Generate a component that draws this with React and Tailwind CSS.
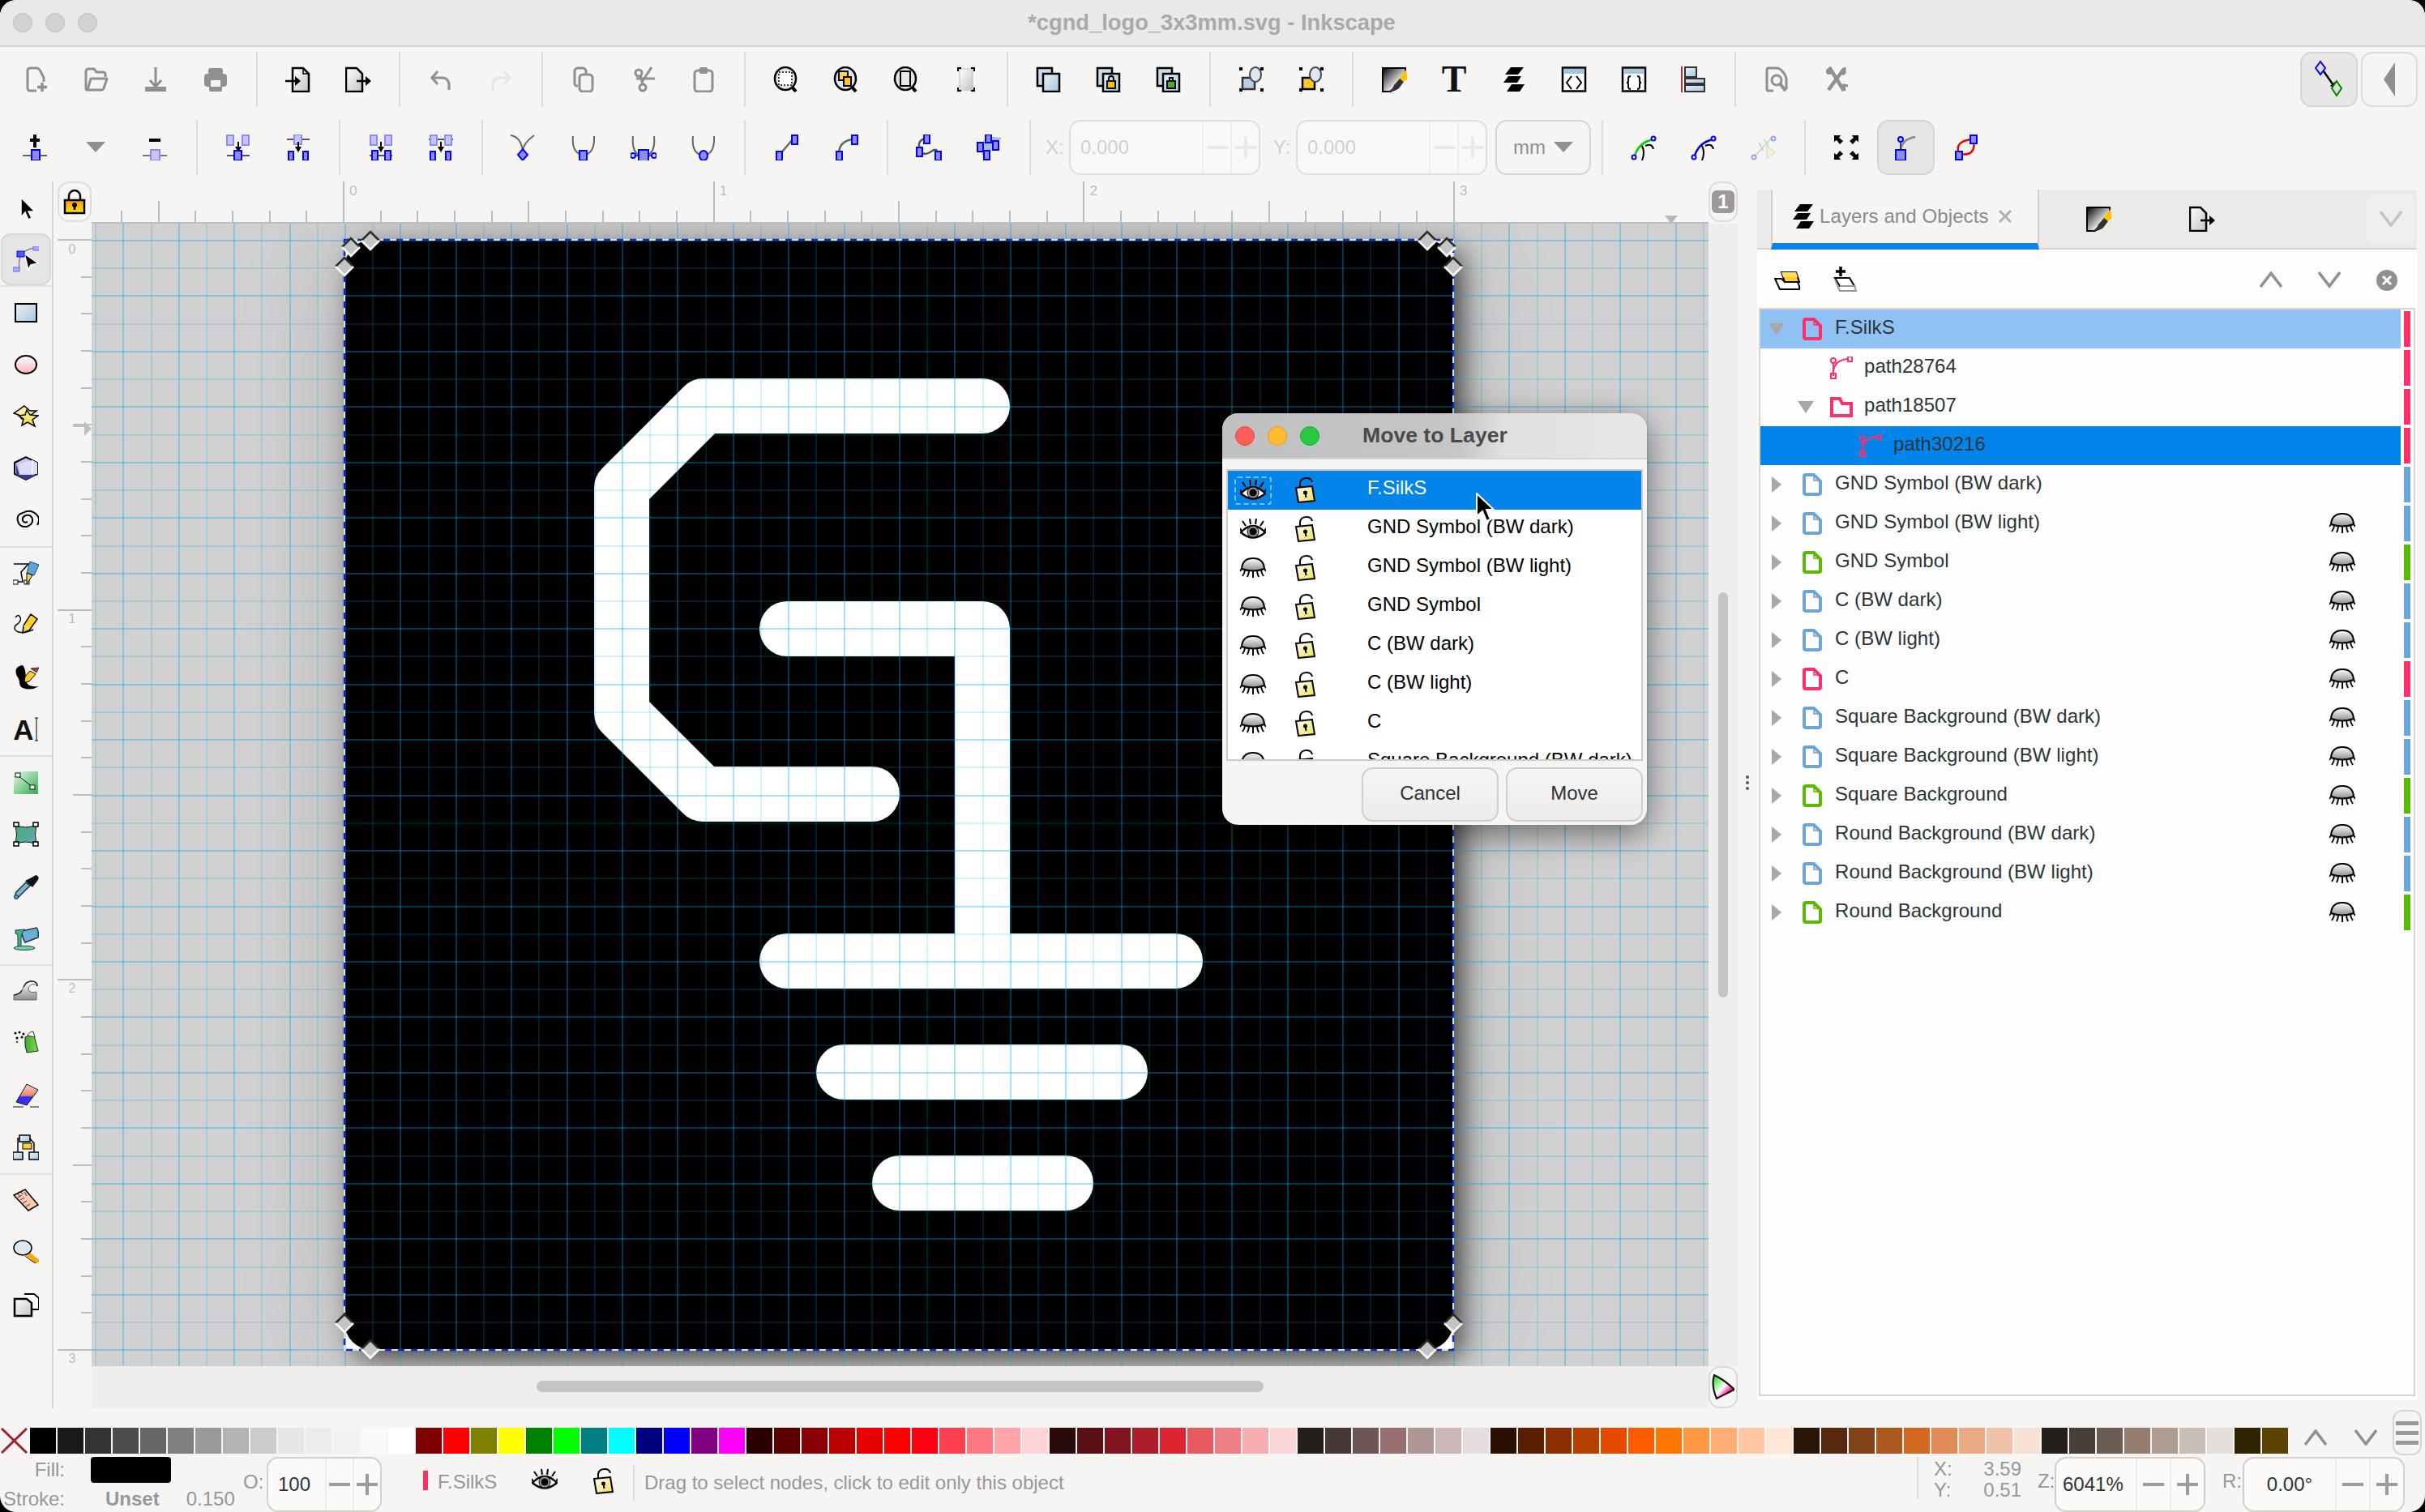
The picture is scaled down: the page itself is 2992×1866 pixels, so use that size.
import React from 'react';

const G = '#8f9091';
const Svg = ({ w = 32, h = 32, vb = '0 0 32 32', children, className }) => (
  <svg width={w} height={h} viewBox={vb} className={className} fill="none">{children}</svg>
);

const Defs = () => (
  <svg className="absolute w-0 h-0">
    <defs>
      <linearGradient id="bl" x1="0" y1="0" x2="1" y2="1"><stop offset="0" stopColor="#eaf2f8" /><stop offset="1" stopColor="#a6c6de" /></linearGradient>
      <linearGradient id="ye" x1="0" y1="0" x2="0" y2="1"><stop offset="0" stopColor="#fff6b0" /><stop offset="1" stopColor="#f5d21f" /></linearGradient>
      <linearGradient id="lk" x1="0" y1="0" x2="0" y2="1"><stop offset="0" stopColor="#ff9a00" /><stop offset="1" stopColor="#ffe800" /></linearGradient>
      <linearGradient id="lo" x1="0" y1="0" x2="1" y2="1"><stop offset="0" stopColor="#ffffff" /><stop offset="1" stopColor="#f2dc50" /></linearGradient>
      <linearGradient id="gy" x1="0" y1="0" x2="1" y2="1"><stop offset="0" stopColor="#ffffff" /><stop offset="1" stopColor="#c4c4c4" /></linearGradient>
      <linearGradient id="gv" x1="0" y1="0" x2="0" y2="1"><stop offset="0" stopColor="#ffffff" /><stop offset="1" stopColor="#8f8f8f" /></linearGradient>
      <linearGradient id="pk" x1="0" y1="0" x2="0" y2="1"><stop offset="0" stopColor="#ffffff" /><stop offset="1" stopColor="#ffb0bc" /></linearGradient>
      <linearGradient id="gn" x1="0" y1="0" x2="1" y2="1"><stop offset="0" stopColor="#e8f5ea" /><stop offset="1" stopColor="#2fae4e" /></linearGradient>
      <linearGradient id="tl" x1="0" y1="0" x2="1" y2="1"><stop offset="0" stopColor="#3fae78" /><stop offset="1" stopColor="#6aa5b5" /></linearGradient>
      <linearGradient id="fs" x1="0" y1="0" x2="1" y2="1"><stop offset="0" stopColor="#000000" /><stop offset="0.7" stopColor="#ffffff" /></linearGradient>
      <linearGradient id="er" x1="0" y1="0" x2="0" y2="1"><stop offset="0" stopColor="#ffd0c0" /><stop offset="0.55" stopColor="#f08070" /><stop offset="0.6" stopColor="#3030ff" /></linearGradient>
      <linearGradient id="sp" x1="0" y1="0" x2="1" y2="0"><stop offset="0" stopColor="#3a3" /><stop offset="1" stopColor="#8d4" /></linearGradient>
      <linearGradient id="hue" x1="0" y1="0" x2="1" y2="1"><stop offset="0" stopColor="#00e000" /><stop offset="0.5" stopColor="#ffffff" /><stop offset="0.75" stopColor="#ff0080" /><stop offset="1" stopColor="#4000ff" /></linearGradient>
    </defs>
  </svg>
);

const Nd = ({ x, y, w = 8, h = 12, pale }) => (
  <rect x={x} y={y} width={w} height={h} fill={pale ? '#c6c6ff' : '#8c8cf2'} stroke={pale ? '#8c8cf8' : '#0000ff'} strokeWidth="2" />
);
const DownArrow = () => (<><path d="M16 9v9" stroke="#000" strokeWidth="2" /><path d="M12 15h8l-4 7z" fill="#000" /></>);

/* ---------- toolbar 1 ---------- */
const iNew = <Svg><path d="M17 30H9a3 3 0 0 1-3-3V5a3 3 0 0 1 3-3h8q3 0 5 4t4 8v5" stroke={G} strokeWidth="3" /><path d="M24 20v11M18 25.500h12" stroke={G} strokeWidth="3.500" /></Svg>;
const iOpen = <Svg><path d="M6 29a2 2 0 0 1-2-2V6a3 3 0 0 1 3-3h7l3 4h8q3 0 3 3v3" stroke={G} strokeWidth="3" /><path d="M6 29l4-14h20l-4 12q-.5 2-3 2z" stroke={G} strokeWidth="3" strokeLinejoin="round" /></Svg>;
const iSave = <Svg><path d="M16 1v23M9 17l7 8 7-8" stroke={G} strokeWidth="3" /><rect x="3" y="25" width="26" height="6" fill={G} /></Svg>;
const iPrint = <Svg><rect x="7" y="2" width="18" height="8" rx="3" fill={G} /><rect x="2" y="9" width="28" height="16" rx="4" fill={G} /><rect x="8" y="20" width="16" height="11" rx="2" fill={G} /><rect x="10" y="17" width="12" height="8" fill="#f6f5f4" /></Svg>;
const DocI = ({ x = 8 }) => <path d={`M${x} 2h13l7 7v22h-20z`} fill="url(#gy)" stroke="#000" strokeWidth="2.500" />;
const iImport = <Svg><DocI x={9} /><path d="M9 2h13v7h7" stroke="#000" strokeWidth="1.500" /><path d="M-1 18h14" stroke="#000" strokeWidth="2.500" /><path d="M12 12l7 6-7 6z" fill="#000" /></Svg>;
const iExport = <Svg><DocI x={1} /><path d="M14 18h12" stroke="#000" strokeWidth="2.500" /><path d="M25 12l7 6-7 6z" fill="#000" /></Svg>;
const iUndo = <Svg><path d="M12 6L5 14l7 8M5 14h13a8 8 0 0 1 8 8v7" stroke={G} strokeWidth="3.200" /></Svg>;
const iRedo = <Svg><path d="M20 6l7 8-7 8M27 14H14a8 8 0 0 0-8 8v7" stroke="#e6e6e6" strokeWidth="3.200" /></Svg>;
const iCopy = <Svg><path d="M9 24H8a3 3 0 0 1-3-3V6a4 4 0 0 1 4-4h6a4 4 0 0 1 4 4v3" stroke={G} strokeWidth="3" /><rect x="11" y="10" width="16" height="21" rx="4" stroke={G} strokeWidth="3" /></Svg>;
const iCut = <Svg><circle cx="10" cy="8" r="4" stroke={G} strokeWidth="3" /><circle cx="15" cy="26" r="4" stroke={G} strokeWidth="3" /><path d="M12 11l3 11M26 1L14 19M7 15h23" stroke={G} strokeWidth="3" /></Svg>;
const iPaste = <Svg><rect x="5" y="5" width="22" height="26" rx="4" stroke={G} strokeWidth="3" /><rect x="11" y="1" width="10" height="8" rx="2" fill={G} /></Svg>;
const Mag = ({ children }) => (<><path d="M22 24l6 7" stroke="#000" strokeWidth="4" /><ellipse cx="15" cy="15" rx="13" ry="14" fill="#dbe8f2" stroke="#000" strokeWidth="2.500" />{children}</>);
const iZS = <Svg><Mag><rect x="7" y="7" width="16" height="16" fill="#fff" stroke="#000" strokeWidth="1.500" strokeDasharray="2 2" /></Mag></Svg>;
const iZD = <Svg><Mag><rect x="7" y="6" width="11" height="11" fill="#ffd24a" stroke="#000" strokeWidth="2" /><rect x="13" y="13" width="9" height="11" fill="#ffc020" stroke="#000" strokeWidth="2" /></Mag></Svg>;
const iZP = <Svg><Mag><rect x="9" y="6" width="12" height="18" fill="#e8e8e8" stroke="#000" strokeWidth="2" /></Mag></Svg>;
const iZC = <Svg w={24}  vb="4 0 24 32"><rect x="8" y="3" width="16" height="26" fill="url(#gy)" stroke="#bbb" /><path d="M5 1h5v2H7v3H5zM22 1h5v5h-2V3h-3zM5 26h2v3h3v2H5zM25 26h2v5h-5v-2h3z" fill="#000" /></Svg>;
const iDup = <Svg><rect x="2" y="2" width="18" height="22" fill="#c9dcec" stroke="#000" strokeWidth="2.500" /><rect x="9" y="9" width="20" height="22" fill="url(#bl)" stroke="#000" strokeWidth="2.500" /></Svg>;
const iClone = <Svg><rect x="2" y="2" width="18" height="22" fill="#c9dcec" stroke="#000" strokeWidth="2.500" /><rect x="9" y="9" width="20" height="22" fill="url(#bl)" stroke="#000" strokeWidth="2.500" /><rect x="14" y="18" width="10" height="9" fill="#ffc400" stroke="#000" strokeWidth="2" /><path d="M16 18v-3a3 3 0 0 1 6 0v3" stroke="#000" strokeWidth="2" /></Svg>;
const iUnlink = <Svg><rect x="2" y="2" width="18" height="22" fill="#c9dcec" stroke="#000" strokeWidth="2.500" /><rect x="9" y="9" width="20" height="22" fill="url(#bl)" stroke="#000" strokeWidth="2.500" /><rect x="14" y="18" width="10" height="9" fill="#4caf2a" stroke="#000" strokeWidth="2" /><path d="M17 18v-4h4v4" stroke="#000" strokeWidth="2" /></Svg>;
const Corners = () => <path d="M1 1h4v4H1zM27 27h4v4h-4zM1 27h4v4H1zM27 1h4v4h-4z" fill="#000" />;
const iSelGrp = <Svg><Corners /><rect x="5" y="14" width="15" height="14" fill="#b9d0e4" stroke="#333" strokeWidth="2.500" /><ellipse cx="21" cy="10" rx="7" ry="9" fill="#dbe8f2" stroke="#445" strokeWidth="2" /></Svg>;
const iSelGrp2 = <Svg><Corners /><rect x="5" y="14" width="15" height="14" fill="#ffc81f" stroke="#000" strokeWidth="2.500" /><ellipse cx="21" cy="10" rx="7" ry="9" fill="#dbe8f2" stroke="#445" strokeWidth="2" /></Svg>;
const iFS = <Svg><path d="M2 2h28v10L12 31H2z" fill="url(#fs)" stroke="#000" strokeWidth="2" /><path d="M31 4l2 12-8 3-4-3z" fill="#ffc400" /><path d="M23 15l5 4-6 8q-6 5-14 4 6-2 8-8z" fill="#333" /></Svg>;
const iT = <Svg w={48} h={56} vb="-8 -12 48 56"><text x="16" y="31" textAnchor="middle" fontFamily="'Liberation Serif',serif" fontWeight="bold" fontSize="46" fill="#111">T</text></Svg>;
const layersPaths = <path d="M12 1h16l-7 9H5zM9 12h16l-5 8H3zM13 22h16l-6 9H7z" fill="#000" />;
const iLayers = <Svg>{layersPaths}</Svg>;
const Win = ({ children }) => <Svg><rect x="2" y="1.500" width="28" height="29" fill="#fff" stroke="#000" strokeWidth="2.500" /><rect x="3" y="3" width="26" height="6" fill="#a6c6de" />{children}</Svg>;
const iXml = <Win><path d="M13 12l-6 8 6 8M19 12l6 8-6 8" stroke="#000" strokeWidth="2" /></Win>;
const iCss = <Win><path d="M12 12q-3 0-3 3v3q0 2-2 2 2 0 2 2v3q0 3 3 3M20 12q3 0 3 3v3q0 2 2 2-2 0-2 2v3q0 3-3 3" stroke="#000" strokeWidth="2" /></Win>;
const iAlign = <Svg><path d="M1 0v32" stroke="#c03030" strokeWidth="2" /><rect x="5" y="1" width="14" height="12" fill="url(#bl)" stroke="#333" strokeWidth="2" /><rect x="5" y="15" width="24" height="6" fill="url(#bl)" stroke="#333" strokeWidth="2" /><rect x="5" y="23" width="24" height="8" fill="url(#bl)" stroke="#333" strokeWidth="2" /></Svg>;
const iDocP = <Svg><path d="M12 30H6a2 2 0 0 1-2-2V4a2 2 0 0 1 2-2h10q4 0 8 5t4 9v12" stroke={G} strokeWidth="3" /><circle cx="16" cy="17" r="6" stroke={G} strokeWidth="3" /><path d="M20 21l7 9" stroke={G} strokeWidth="4" /></Svg>;
const iPrefs = <Svg><path d="M7 1l18 29M25 3L6 29" stroke={G} strokeWidth="4.500" /><circle cx="7" cy="6" r="4" fill={G} /><path d="M26 1v7l-3 2M26 30l-1-7 5 1" stroke={G} strokeWidth="3" /></Svg>;
const iSnap = <Svg w={36} h={60} vb="0 0 36 60"><path d="M7 8l6 8-6 8-6-8z" fill="#ddd" stroke="#00f" strokeWidth="2" /><path d="M11 20l14 20" stroke="#000" strokeWidth="2.500" /><path d="M28 43l-9-5 7-6z" fill="#000" /><path d="M27 32l6 9-6 9-6-9z" fill="#ddd" stroke="#080" strokeWidth="2" /></Svg>;

/* ---------- toolbar 2 ---------- */
const iAdd = <Svg><path d="M15 0v16M9 7h12" stroke="#000" strokeWidth="4" /><path d="M0 26h30" stroke="#666" strokeWidth="2" /><Nd x={11} y={19} w={10} h={13} /></Svg>;
const iDelN = <Svg><path d="M8 7h14" stroke="#000" strokeWidth="4" /><path d="M0 26h30" stroke="#777" strokeWidth="2" /><Nd x={10} y={19} w={11} h={13} pale /></Svg>;
const iJoin = <Svg><Nd x={2} y={1} h={12} pale /><Nd x={21} y={1} h={12} pale /><DownArrow /><path d="M2 26h28" stroke="#555" strokeWidth="2" /><Nd x={11} y={20} w={9} h={12} /></Svg>;
const iBrk = <Svg><path d="M2 6h28" stroke="#555" strokeWidth="2" /><Nd x={11} y={0} w={9} h={12} pale /><DownArrow /><Nd x={4} y={21} w={6} h={11} /><Nd x={22} y={21} w={6} h={11} /></Svg>;
const iJSeg = <Svg><Nd x={3} y={1} h={12} pale /><Nd x={21} y={1} h={12} pale /><DownArrow /><path d="M2 26h28" stroke="#555" strokeWidth="2" /><Nd x={5} y={20} w={7} h={12} /><Nd x={21} y={20} w={7} h={12} /></Svg>;
const iDSeg = <Svg><path d="M1 6h30" stroke="#555" strokeWidth="2" /><Nd x={3} y={1} w={8} h={12} pale /><Nd x={21} y={1} w={8} h={12} pale /><DownArrow /><Nd x={3} y={21} w={6} h={11} /><Nd x={22} y={21} w={6} h={11} /></Svg>;
const iCusp = <Svg><path d="M0 1q13 2 15 20 0-10 14-20" stroke="#666" strokeWidth="2" /><path d="M15 18l6 7-6 7-6-7z" fill="#8c8cf2" stroke="#00f" strokeWidth="2" /></Svg>;
const iSm = <Svg><path d="M3 2q-2 20 11 23M29 2q1 20-11 23" stroke="#666" strokeWidth="2" /><Nd x={11} y={20} w={9} h={12} /></Svg>;
const iSym = <Svg><path d="M3 2q-2 20 9 24M29 2q2 20-9 24" stroke="#666" strokeWidth="2" /><path d="M2 26h28" stroke="#33c" strokeWidth="2" /><Nd x={10} y={19} w={12} h={14} /><circle cx="3" cy="26" r="3" fill="#ddf" stroke="#00f" strokeWidth="2" /><circle cx="29" cy="26" r="3" fill="#ddf" stroke="#00f" strokeWidth="2" /></Svg>;
const iAuto = <Svg><path d="M3 2q-2 20 10 23M29 2q1 20-10 23" stroke="#666" strokeWidth="2" /><ellipse cx="16" cy="26" rx="5" ry="6" fill="#8c8cf2" stroke="#00f" strokeWidth="2" /></Svg>;
const iLine = <Svg><path d="M7 26L24 6" stroke="#666" strokeWidth="2.500" /><Nd x={4} y={21} w={7} h={11} /><Nd x={23} y={1} w={7} h={11} /></Svg>;
const iCurve = <Svg><path d="M7 24Q7 8 24 6" stroke="#666" strokeWidth="2.500" /><Nd x={4} y={21} w={7} h={11} /><Nd x={23} y={1} w={7} h={11} /></Svg>;
const iO2P = <Svg><path d="M11 5Q1 8 5 18t14 3 6 8" stroke="#555" strokeWidth="2.500" /><Nd x={10} y={0} w={7} h={11} /><Nd x={1} y={16} w={7} h={11} /><Nd x={24} y={21} w={7} h={11} /></Svg>;
const iS2P = <Svg><path d="M12 2l20 2-12 14-6 14q-10-8-6-16z" fill="#a8b8f0" /><Nd x={12} y={0} w={7} h={10} /><Nd x={2} y={10} w={7} h={11} /><Nd x={21} y={8} w={7} h={11} /><Nd x={10} y={20} w={7} h={11} /></Svg>;
const iLPE = <Svg><path d="M4 30Q8 10 28 6" stroke="#00d000" strokeWidth="2.500" /><path d="M18 14q8-4 10 4M14 14q4 8 0 18" stroke="#000" strokeWidth="2" /><circle cx="4" cy="28" r="2.500" fill="#fff" stroke="#00f" strokeWidth="2" /><circle cx="28" cy="5" r="2.500" fill="#fff" stroke="#00f" strokeWidth="2" /></Svg>;
const iClip = <Svg><path d="M4 30Q8 10 28 6" stroke="#0000e0" strokeWidth="2.500" /><path d="M18 14q8-4 10 4M14 14q4 8 0 18" stroke="#000" strokeWidth="2" /><circle cx="4" cy="28" r="2.500" fill="#fff" stroke="#00f" strokeWidth="2" /><circle cx="28" cy="5" r="2.500" fill="#fff" stroke="#00f" strokeWidth="2" /></Svg>;
const iMask = <Svg><g opacity="0.35"><path d="M4 28L26 4M10 10l6 10M16 5l6 9" stroke="#7a8" strokeWidth="2" /><path d="M20 14v16l10-8z" fill="#ffe98a" stroke="#888" /><circle cx="4" cy="28" r="2.500" fill="#fff" stroke="#00f" strokeWidth="2" /><circle cx="28" cy="5" r="2.500" fill="#fff" stroke="#00f" strokeWidth="2" /></g></Svg>;
const iTrans = <Svg><path d="M1 1h8l-2 3 5 4-4 4-4-5-3 2zM31 1v8l-3-2-4 5-4-4 5-4-2-3zM1 31v-8l3 2 4-5 4 4-5 4 2 3zM31 31h-8l2-3-5-4 4-4 4 5 3-2z" fill="#000" /></Svg>;
const iHandles = <Svg><path d="M9 22Q9 6 27 3" stroke="#888" strokeWidth="2.500" /><path d="M9 10v12" stroke="#444" strokeWidth="2" /><circle cx="9" cy="6" r="3" fill="#ccf" stroke="#00f" strokeWidth="2" /><Nd x={3} y={19} w={12} h={13} /></Svg>;
const iOut = <Svg><path d="M8 24Q2 8 24 6M8 24q22 4 18-18" stroke="#e00" strokeWidth="2.500" /><Nd x={4} y={21} w={8} h={10} /><Nd x={22} y={1} w={8} h={10} /></Svg>;

/* ---------- tools ---------- */
const tSel = <Svg><path d="M10 4l0 24 5-6 4 9 4-2-4-8h8z" fill="#000" stroke="#fff" strokeWidth="1.500" /></Svg>;
const tNode = <Svg><path d="M8 28Q6 14 12 8 20 2 28 2" stroke="#888" strokeWidth="1.500" /><path d="M14 9l17 12-9 2-3 6z" fill="#000" stroke="#fff" strokeWidth="1.500" /><rect x="5" y="6" width="9" height="7" fill="#5858f0" stroke="#00f" /><rect x="25" y="0" width="8" height="5" fill="#aaf" stroke="#66f" /><rect x="0" y="26" width="8" height="5" fill="#aaf" stroke="#66f" /></Svg>;
const tRect = <Svg><rect x="3" y="5" width="26" height="22" fill="url(#bl)" stroke="#000" strokeWidth="2" /></Svg>;
const tEll = <Svg><ellipse cx="16" cy="16" rx="13" ry="11" fill="url(#pk)" stroke="#000" strokeWidth="2" /></Svg>;
const tStar = <Svg><path d="M1 12L14 3l7 6 8 0-8 6-10 4-4-5z" fill="#ffeea0" stroke="#000" strokeWidth="1.500" /><path d="M17 8l4 6 10 1-7 5 3 8-9-5-7 4 2-8-6-4 8-1z" fill="url(#ye)" stroke="#000" strokeWidth="1.500" /></Svg>;
const t3d = <Svg><path d="M2 9L16 2l14 7v14l-14 7-14-7z" fill="#c6c6ee" stroke="#000" strokeWidth="2" /><path d="M8 10l16-4 6 3v14H8z" fill="#dcdcf8" /><path d="M4 10l4 14h22l-14 6-12-6z" fill="#3a3a90" /><path d="M24 6v17" stroke="#fff" /></Svg>;
const tSpi = <Svg><path d="M18 18q-5 2-6-2t4-6q7-1 8 5t-7 9q-9 1-11-7T12 7q9-5 16 1t2 14" stroke="#000" strokeWidth="2" /></Svg>;
const tPen = <Svg><path d="M1 4h18l-9 10 2 12H4" stroke="#000" strokeWidth="1.500" /><rect x="0" y="24" width="6" height="5" fill="#fff" stroke="#000" /><rect x="14" y="24" width="6" height="5" fill="#fff" stroke="#000" /><path d="M21 1l11 4-6 13-9-3z" fill="#5aa6d8" stroke="#246" strokeWidth="1" /><path d="M17 15l7 3-5 8-2 3z" fill="#ffd040" stroke="#000" /></Svg>;
const tPcl = <Svg><path d="M3 6q4-5 6 0t-6 10q-3 6 4 8t18-3" stroke="#000" strokeWidth="1.500" /><path d="M22 2l8 6-10 14-8 3 1-9z" fill="#ffd028" stroke="#000" strokeWidth="1.500" /><path d="M13 16q5 1 6 5" stroke="#fff" /></Svg>;
const tCal = <Svg><path d="M12 1C2 2 2 10 6 16s0 10 6 13q10 4 20-2-10 1-14-3C14 20 18 8 12 1z" fill="#000" /><path d="M21 8l7 4-8 9-6 1 1-7z" fill="#ffd028" stroke="#000" /><path d="M22 5l10-1-3 6z" fill="#c83030" stroke="#333" /></Svg>;
const tTxt = <Svg w={48} h={56} vb="-8 -12 48 56"><text x="13" y="29" textAnchor="middle" fontFamily="'Liberation Sans',sans-serif" fontWeight="bold" fontSize="35" fill="#111">A</text><path d="M27 2h4M29 2v28M27 30h4" stroke="#000" strokeWidth="1" /></Svg>;
const tGrad = <Svg><rect x="1" y="2" width="30" height="28" fill="url(#gn)" /><path d="M6 7l19 15" stroke="#111" strokeWidth="1" /><rect x="3" y="4" width="6" height="5" fill="#fff" stroke="#111" /><rect x="21" y="19" width="6" height="5" fill="#fff" stroke="#111" /></Svg>;
const tMesh = <Svg><path d="M3 4q12 6 26 0-3 12 0 24-14-6-26 0 3-12 0-24z" fill="url(#tl)" stroke="#111" /><rect x="1" y="1" width="6" height="5" fill="#fff" stroke="#000" strokeWidth="1.500" /><rect x="25" y="1" width="6" height="5" fill="#fff" stroke="#000" strokeWidth="1.500" /><rect x="1" y="25" width="6" height="5" fill="#fff" stroke="#000" strokeWidth="1.500" /><rect x="25" y="25" width="6" height="5" fill="#fff" stroke="#000" strokeWidth="1.500" /></Svg>;
const tDrop = <Svg><path d="M2 29l4 1L21 15l-5-4L4 23z" fill="#7ab2d8" stroke="#234" strokeWidth="1.500" /><path d="M15 9l9 8 3-4 4-5q2-5-3-6l-5 3z" fill="#111" /><circle cx="4" cy="29" r="2.500" fill="#5a9ac8" stroke="#234" /></Svg>;
const tBuck = <Svg><path d="M11 7l18-4q3 3 2 12L15 21q-4-6-4-14z" fill="#6cb0d8" stroke="#234" strokeWidth="1.500" /><path d="M3 6l12-1q-4 2-5 10v12H6V14q0-4-3-4z" fill="#4caf80" stroke="#145" /><ellipse cx="14" cy="28" rx="13" ry="2.500" fill="#7fd0a0" stroke="#145" /></Svg>;
const tTwk = <Svg><path d="M1 26V20q10-2 12-10 3-7 10-7t7 6q-3-4-7-2t-4 6q1 5 10 3v10z" fill="url(#gv)" stroke="#666" /><path d="M13 10q3-7 10-7t7 6" stroke="#222" strokeWidth="1.500" /><path d="M1 20q8-1 10-6" stroke="#222" strokeWidth="1.500" /></Svg>;
const tSpr = <Svg><path d="M15 8q6-4 11-2l5 19-14 2q-3-9-2-19z" fill="url(#sp)" stroke="#123" /><path d="M18 6q2-5 7-5l2 7z" fill="#fff" stroke="#333" /><g fill="#000"><circle cx="3" cy="3" r="1.500" /><circle cx="8" cy="2" r="1.500" /><circle cx="13" cy="4" r="1.500" /><circle cx="5" cy="9" r="1.500" /><circle cx="11" cy="8" r="1.500" /><circle cx="5" cy="14" r="1" /></g></Svg>;
const tEr = <Svg><path d="M17 2l14 7-14 19-13-4z" fill="url(#er)" stroke="#111" strokeWidth="1" /><path d="M0 30h13M21 30h11" stroke="#111" strokeWidth="1" /></Svg>;
const tCon = <Svg><rect x="8" y="1" width="13" height="8" fill="url(#bl)" stroke="#000" strokeWidth="1.500" /><rect x="0" y="22" width="12" height="9" fill="url(#bl)" stroke="#000" strokeWidth="1.500" /><rect x="20" y="22" width="12" height="9" fill="url(#bl)" stroke="#000" strokeWidth="1.500" /><rect x="12" y="11" width="11" height="7" fill="#ffd040" stroke="#000" /><path d="M8 5H6v17M21 5l5 6v11" stroke="#000" strokeWidth="1.500" /></Svg>;
const tMea = <Svg><path d="M1 9L15 2l16 19-12 7z" fill="#fdc8b0" stroke="#000" strokeWidth="1.500" /><path d="M6 7l2 3M10 5l2 3M14 5l3 5M6 12l5-3M9 15l5-3M12 19l5-3M16 23l5-3" stroke="#333" /></Svg>;
const tZoom = <Svg><path d="M19 18l10 8" stroke="#ffa800" strokeWidth="6" strokeLinecap="round" /><ellipse cx="12" cy="10" rx="11" ry="9" fill="#dbe8f2" stroke="#000" strokeWidth="1.500" /><path d="M15 20q6 5 13 9" stroke="#000" /></Svg>;
const tPag = <Svg><path d="M14 3h12l6 5v14h-12" fill="#fff" stroke="#000" strokeWidth="2" /><path d="M2 9h15l6 5v16H2z" fill="url(#gy)" stroke="#000" strokeWidth="2.500" /></Svg>;

const Eye = ({ w = 32, h = 28 }) => (
  <Svg w={w} h={h} vb="0 0 32 28">
    <path d="M1 18Q16 2 31 18 16 31 1 18z" fill="#fff" stroke="#000" strokeWidth="2.500" />
    <circle cx="16" cy="17" r="7" fill="#999" stroke="#000" /><circle cx="16" cy="17" r="4.500" fill="#000" />
    <path d="M7 10L3 4M13 8l-1-7M19 8l1-7M25 10l4-6M2 17L0 13M30 17l2-4" stroke="#000" strokeWidth="2" />
  </Svg>
);
const EyeOff = ({ w = 32, h = 26 }) => (
  <Svg w={w} h={h} vb="0 0 32 26">
    <path d="M2 14Q3 1 16 1t14 13Q16 19 2 14z" fill="url(#gv)" stroke="#000" strokeWidth="2" />
    <path d="M6 15q0 4-3 8M11 16q0 4-2 8M16 17v8M21 16q0 4 2 8M26 15q0 4 3 8M2 14l-2 3M30 14l2 3" stroke="#000" strokeWidth="2" />
  </Svg>
);
const LockO = () => (
  <Svg w={26} h={32} vb="0 0 26 32">
    <path d="M6 12V7q1-6 8-6 6 0 7 5" stroke="#000" strokeWidth="2" />
    <path d="M1 13l20-2 3 18-20 2z" fill="url(#lo)" stroke="#000" strokeWidth="2" />
    <circle cx="12.500" cy="19" r="2.500" fill="#000" /><path d="M12.500 19l1 6" stroke="#000" strokeWidth="2" />
  </Svg>
);

/* ---------- helpers ---------- */
const B = ({ children, w = 'w-[74px]' }) => <div className={`${w} h-[68px] flex items-center justify-center shrink-0`}>{children}</div>;
const Sep = () => <div className="w-[2px] h-[68px] mx-[13px] bg-[#dfdcd9] shrink-0" />;
const Tr = ({ d = 'down', c = '#a8a8a8', s = 20 }) => (
  <Svg w={s} h={s} vb="0 0 20 20">
    <path d={d === 'down' ? 'M0 3h20L10 18z' : 'M4 0v20L16 10z'} fill={c} />
  </Svg>
);
const Chev = ({ up, c = G, w = 28 }) => (
  <Svg w={w} h={w * 0.72} vb="0 0 28 20"><path d={up ? 'M1 19L14 2l13 17' : 'M1 1l13 17L27 1'} stroke={c} strokeWidth="3.500" /></Svg>
);
const Spin = ({ w, val, disabled, valCls = '', cols = 'w-[42px]' }) => (
  <div className={`${w} h-[68px] shrink-0 border-2 border-[#d3cfca] rounded-[14px] bg-[#fbfaf9] flex items-center ${disabled ? 'opacity-60' : ''}`}>
    <div className={`flex-1 ${valCls}`}>{val}</div>
    <div className={`${cols} h-full border-l-2 border-[#eceae8] flex items-center justify-center`}><div className={`w-[26px] h-[4px] ${disabled ? 'bg-[#e3e1de]' : 'bg-[#9b9b9b]'}`} /></div>
    <div className={`${cols} h-full border-l-2 border-[#eceae8] flex items-center justify-center relative`}><div className={`w-[26px] h-[4px] ${disabled ? 'bg-[#e3e1de]' : 'bg-[#9b9b9b]'}`} /><div className={`absolute w-[4px] h-[26px] ${disabled ? 'bg-[#e3e1de]' : 'bg-[#9b9b9b]'}`} /></div>
  </div>
);

const SW = ['#000000','#1a1a1a','#333333','#4d4d4d','#666666','#808080','#999999','#b3b3b3','#cccccc','#e6e6e6','#ececec','#f2f2f2','#f9f9f9','#ffffff',
  '#800000','#ff0000','#808000','#ffff00','#008000','#00ff00','#008080','#00ffff','#000080','#0000ff','#800080','#ff00ff',
  '#2b0000','#5a0000','#8a0000','#bb0000','#e60000','#ff0000','#ff0010','#ff4050','#ff7a80','#ffa5aa','#ffd5d7',
  '#2a0a0a','#5a0f14','#801520','#ad1e2b','#dc2530','#e85a5f','#ee8085','#f5adb0','#fad6d8',
  '#241f1c','#483737','#6f5555','#976f6f','#b09595','#cbb7b7','#e5dddd',
  '#2b0f00','#5a1e00','#8b2e00','#b54000','#e54b00','#ff5c00','#ff7700','#ff9844','#ffae74','#ffc7a3','#ffe6d7',
  '#2b1708','#56290e','#7f4317','#aa581d','#d46a22','#e08a55','#e9a983','#f0c2aa','#f8e2d6',
  '#241f1c','#483e37','#6c5d53','#957c6e','#ae9c90','#c9bfb7','#e3dedb','#302400','#5c4400'];

const RED = '#ff2f6a', BLU = '#6aa6d8', GRN = '#58bb00';
const ROWS = [
  { t: 'F.SilkS', c: RED, ar: 'down', ic: 'doc', d: 0, sel: 'bg-[#8fc1f5]' },
  { t: 'path28764', c: RED, ic: 'path', d: 1 },
  { t: 'path18507', c: RED, ar: 'down', ic: 'fold', d: 1 },
  { t: 'path30216', c: RED, ic: 'path', d: 2, sel: 'bg-[#0284ea]' },
  { t: 'GND Symbol (BW dark)', c: BLU, ar: 'r', ic: 'doc', d: 0 },
  { t: 'GND Symbol (BW light)', c: BLU, ar: 'r', ic: 'doc', d: 0, off: 1 },
  { t: 'GND Symbol', c: GRN, ar: 'r', ic: 'doc', d: 0, off: 1 },
  { t: 'C (BW dark)', c: BLU, ar: 'r', ic: 'doc', d: 0, off: 1 },
  { t: 'C (BW light)', c: BLU, ar: 'r', ic: 'doc', d: 0, off: 1 },
  { t: 'C', c: RED, ar: 'r', ic: 'doc', d: 0, off: 1 },
  { t: 'Square Background (BW dark)', c: BLU, ar: 'r', ic: 'doc', d: 0, off: 1 },
  { t: 'Square Background (BW light)', c: BLU, ar: 'r', ic: 'doc', d: 0, off: 1 },
  { t: 'Square Background', c: GRN, ar: 'r', ic: 'doc', d: 0, off: 1 },
  { t: 'Round Background (BW dark)', c: BLU, ar: 'r', ic: 'doc', d: 0, off: 1 },
  { t: 'Round Background (BW light)', c: BLU, ar: 'r', ic: 'doc', d: 0, off: 1 },
  { t: 'Round Background', c: GRN, ar: 'r', ic: 'doc', d: 0, off: 1 },
];
const RIcon = ({ k, c }) => {
  if (k === 'doc') return <Svg w={24} h={28} vb="0 0 24 28"><path d="M2 4a2 2 0 0 1 2-2h10l8 8v14a2 2 0 0 1-2 2H4a2 2 0 0 1-2-2z" stroke={c} strokeWidth="4" /><path d="M14 3v6h6" stroke={c} strokeWidth="1.500" /></Svg>;
  if (k === 'fold') return <Svg w={28} h={25} vb="0 0 28 25"><path d="M2 2h10l3 6h11v15H2z" stroke={c} strokeWidth="4" /></Svg>;
  return <Svg w={28} h={28} vb="0 0 28 28"><path d="M4 24V8M4 18q2-14 18-15" stroke={c} strokeWidth="2" /><circle cx="4" cy="5" r="3" stroke={c} strokeWidth="2" /><rect x="1" y="21" width="6" height="6" stroke={c} strokeWidth="2" /><rect x="22" y="0" width="5" height="6" stroke={c} strokeWidth="2" /></Svg>;
};

const Tool = ({ ic, on }) => (
  <div className={`h-[64px] flex items-center justify-center shrink-0 ${on ? 'mx-[1px] border-2 border-[#dcd9d5] rounded-[12px] bg-[#e6e5e3]' : ''}`}>{ic}</div>
);
const TSep = () => <div className="h-[2px] bg-[#e2dfdc] shrink-0" />;

/* ---------- canvas ---------- */
const Handle = ({ x, y, r = 11 }) => (
  <g>
    <path d={`M${x - r} ${y}L${x} ${y - r}L${x + r} ${y}L${x} ${y + r}z`} fill="#c4c4c4" />
    <path d={`M${x - r} ${y}L${x} ${y - r}L${x + r} ${y}`} stroke="#2e2a28" strokeWidth="2.500" fill="none" />
    <path d={`M${x + r} ${y}L${x} ${y + r}L${x - r} ${y}`} stroke="#fff" strokeWidth="2.500" fill="none" />
  </g>
);
const Canvas = () => {
  const V = Array.from({ length: 59 }, (_, i) => i - 9);
  const H = Array.from({ length: 42 }, (_, i) => i);
  return (
    <svg width="1995" height="1410" viewBox="113 276 1995 1410" className="block">
      <defs>
        <filter id="sh1" x="-20%" y="-20%" width="140%" height="140%"><feGaussianBlur stdDeviation="18" /></filter>
        <filter id="sh2" x="-20%" y="-20%" width="140%" height="140%"><feGaussianBlur stdDeviation="70" /></filter>
      </defs>
      <rect x="113" y="276" width="1995" height="1410" fill="#d1d1d1" />
      <rect x="425" y="296" width="1368" height="1370" fill="#000" opacity="0.15" filter="url(#sh2)" />
      <rect x="440" y="312" width="1362" height="1362" fill="#000" opacity="0.72" filter="url(#sh1)" />
      <rect x="425" y="296" width="1368" height="1370" fill="#fff" />
      <rect x="425" y="296" width="1368" height="1370" rx="34" fill="#000" />
      <g stroke="#fff" strokeWidth="68" strokeLinecap="round" strokeLinejoin="round" fill="none">
        <path d="M1212 501H868L767 602V880L867 980H1076" />
        <path d="M971 776H1212V1186" />
        <path d="M971 1186H1450M1041 1323H1382M1110 1460H1315" />
      </g>
      <g shapeRendering="crispEdges">
        {V.map(i => <rect key={i} x={Math.round(425 + i * 34.2)} y="276" width="2" height="1410" fill="#00a8f0" opacity={i % 2 === 0 ? 0.34 : 0.17} />)}
        {H.map(i => <rect key={i} x="113" y={Math.round(296 + i * 34.23)} width="1995" height="2" fill="#00a8f0" opacity={i % 2 === 0 ? 0.34 : 0.17} />)}
      </g>
      <rect x="425" y="296" width="1368" height="1370" stroke="#cfe2e4" strokeWidth="2" fill="none" />
      <rect x="425" y="296" width="1368" height="1370" stroke="#1428c0" strokeWidth="2.500" strokeDasharray="8 8" fill="none" />
      <Handle x={425} y={329} /><Handle x={433} y={305} /><Handle x={457} y={297} />
      <Handle x={1761} y={297} /><Handle x={1785} y={305} /><Handle x={1793} y={329} />
      <Handle x={425} y={1633} /><Handle x={457} y={1665} />
      <Handle x={1793} y={1633} /><Handle x={1761} y={1665} />
    </svg>
  );
};
const HRuler = () => {
  const t = Array.from({ length: 37 }, (_, i) => i - 6);
  return (
    <svg width="1995" height="52" viewBox="113 224 1995 52" className="block">
      <rect x="113" y="274" width="1995" height="2" fill="#bdbdbd" />
      {t.map(k => {
        const x = Math.round(423 + k * 45.67);
        const h = k % 10 === 0 ? 50 : k % 5 === 0 ? 26 : 14;
        return <rect key={k} x={x} y={274 - h} width="2" height={h} fill="#bdbdbd" />;
      })}
      {[0, 1, 2, 3].map(n => <text key={n} x={431 + n * 456.7} y="241" fontSize="17" fontFamily="'Liberation Sans',sans-serif" fill="#bcbcbc">{n}</text>)}
      <path d="M2054 266h16l-8 10z" fill="#b8b8b8" />
    </svg>
  );
};
const VRuler = () => {
  const t = Array.from({ length: 31 }, (_, i) => i);
  return (
    <svg width="42" height="1410" viewBox="71 276 42 1410" className="block">
      {t.map(k => {
        const y = Math.round(295 + k * 45.67);
        const x = k % 10 === 0 ? 70 : k % 5 === 0 ? 90 : 100;
        return <rect key={k} x={x} y={y} width={113 - x} height="2" fill="#bdbdbd" />;
      })}
      {[0, 1, 2, 3].map(n => <text key={n} x="89" y={313 - n * 0.5 + n * 456.7} textAnchor="middle" fontSize="16" fontFamily="'Liberation Sans',sans-serif" fill="#bcbcbc">{n}</text>)}
      <path d="M104 520l9 9-9 9z" fill="#c0c0c0" /><path d="M90 525h14v2H90z" fill="#c0c0c0" />
    </svg>
  );
};

const DROWS = ['F.SilkS', 'GND Symbol (BW dark)', 'GND Symbol (BW light)', 'GND Symbol', 'C (BW dark)', 'C (BW light)', 'C', 'Square Background (BW dark)'];

export default function App() {
  return (
    <div className="relative w-[2992px] h-[1866px] bg-black overflow-hidden font-['Liberation_Sans',sans-serif]">
      <Defs />
      <div className="w-full h-full rounded-[20px] overflow-hidden bg-[#f6f5f4] flex flex-col">
        {/* title bar */}
        <div className="h-[58px] shrink-0 bg-[#e8e9e9] border-b-2 border-[#d4d2d0] flex items-center relative">
          <div className="flex gap-[16px] pl-[16px]">
            {[0, 1, 2].map(i => <div key={i} className="w-[24px] h-[24px] rounded-full bg-[#d2d3d3] border border-[#bdbebe]" />)}
          </div>
          <div className="flex-1 text-center text-[27.300px] font-bold text-[#a8a9a9] pr-[122px]">*cgnd_logo_3x3mm.svg - Inkscape</div>
        </div>

        {/* toolbar 1 */}
        <div className="h-[80px] shrink-0 flex items-center pl-[7px]">
          <B>{iNew}</B><B>{iOpen}</B><B>{iSave}</B><B>{iPrint}</B><Sep />
          <B>{iImport}</B><B>{iExport}</B><Sep />
          <B>{iUndo}</B><B>{iRedo}</B><Sep />
          <B>{iCopy}</B><B>{iCut}</B><B>{iPaste}</B><Sep />
          <B>{iZS}</B><B>{iZD}</B><B>{iZP}</B><B>{iZC}</B><Sep />
          <B>{iDup}</B><B>{iClone}</B><B>{iUnlink}</B><Sep />
          <B>{iSelGrp}</B><B>{iSelGrp2}</B><Sep />
          <B>{iFS}</B><B>{iT}</B><B>{iLayers}</B><B>{iXml}</B><B>{iCss}</B><B>{iAlign}</B><Sep />
          <B>{iDocP}</B><B>{iPrefs}</B>
          <div className="ml-auto flex gap-[4px] pr-[9px]">
            <div className="w-[71px] h-[68px] border-2 border-[#d8d5d1] rounded-[14px] bg-[#e8e7e5] flex items-center justify-center">{iSnap}</div>
            <div className="w-[70px] h-[68px] border-2 border-[#dedbd8] rounded-[14px] flex items-center justify-center"><Svg w={14} h={42} vb="0 0 14 42"><path d="M14 0v42L0 21z" fill={G} /></Svg></div>
          </div>
        </div>

        {/* toolbar 2 */}
        <div className="h-[86px] shrink-0 flex items-center pl-[7px] pt-[1px]">
          <B>{iAdd}</B><B><Svg w={24} h={13} vb="0 0 24 13"><path d="M0 0h24L12 13z" fill="#8f9091" /></Svg></B><B>{iDelN}</B><Sep />
          <B>{iJoin}</B><B>{iBrk}</B><Sep />
          <B>{iJSeg}</B><B>{iDSeg}</B><Sep />
          <B>{iCusp}</B><B>{iSm}</B><B>{iSym}</B><B>{iAuto}</B><Sep />
          <B>{iLine}</B><B>{iCurve}</B><Sep />
          <B>{iO2P}</B><B>{iS2P}</B><Sep />
          <span className="text-[24px] text-[#d0d0d0] w-[29px] ml-[5px] shrink-0">X:</span>
          <Spin w="w-[236px]" disabled val="0.000" valCls="text-[24px] text-[#b8b8b8] pl-[12px]" cols="w-[35px]" />
          <span className="text-[24px] text-[#d0d0d0] w-[28px] ml-[16px] shrink-0">Y:</span>
          <Spin w="w-[236px]" disabled val="0.000" valCls="text-[24px] text-[#b8b8b8] pl-[12px]" cols="w-[35px]" />
          <div className="ml-[10px] w-[118px] h-[68px] shrink-0 border-2 border-[#d8d5d1] rounded-[14px] flex items-center justify-center gap-[10px] text-[24px] text-[#8f9091]">mm<Svg w={24} h={13} vb="0 0 24 13"><path d="M0 0h24L12 13z" fill="#8f9091" /></Svg></div>
          <Sep />
          <B>{iLPE}</B><B>{iClip}</B><B>{iMask}</B><Sep />
          <B>{iTrans}</B>
          <div className="w-[71px] h-[68px] mx-[1px] shrink-0 border-2 border-[#d8d5d1] rounded-[14px] bg-[#e6e5e3] flex items-center justify-center">{iHandles}</div>
          <B>{iOut}</B>
        </div>

        {/* main */}
        <div className="h-[1514px] shrink-0 flex">
          {/* tools */}
          <div className="w-[66px] shrink-0 border-r-2 border-[#d9d6d2] flex flex-col">
            <Tool ic={tSel} />
            <Tool ic={tNode} on />
            <TSep /><Tool ic={tRect} /><Tool ic={tEll} /><Tool ic={tStar} /><Tool ic={t3d} /><Tool ic={tSpi} />
            <TSep /><Tool ic={tPen} /><Tool ic={tPcl} /><Tool ic={tCal} /><Tool ic={tTxt} />
            <TSep /><Tool ic={tGrad} /><Tool ic={tMesh} /><Tool ic={tDrop} /><Tool ic={tBuck} />
            <TSep /><Tool ic={tTwk} /><Tool ic={tSpr} /><Tool ic={tEr} /><Tool ic={tCon} />
            <TSep /><Tool ic={tMea} /><Tool ic={tZoom} /><Tool ic={tPag} />
          </div>

          {/* canvas grid */}
          <div className="ml-[5px] grid grid-cols-[42px_1995px_36px] grid-rows-[52px_1410px_52px] shrink-0">
            <div className="border-2 border-[#dfdcd8] rounded-[14px] h-[50px] flex items-center justify-center">
              <Svg w={28} h={32} vb="0 0 28 32">
                <path d="M7 15V9a7 7 0 0 1 14 0v6" stroke="#000" strokeWidth="2.500" />
                <rect x="2" y="14" width="24" height="16" fill="url(#lk)" stroke="#000" strokeWidth="2.500" />
                <circle cx="14" cy="20" r="3" fill="#000" /><path d="M14 20v6" stroke="#000" strokeWidth="2.500" />
              </Svg>
            </div>
            <HRuler />
            <div className="border-2 border-[#dfdcd8] rounded-[14px] h-[50px] flex items-center justify-center">
              <div className="w-[28px] h-[28px] rounded-[6px] bg-[#9a9a9a] text-white font-bold text-[24px] leading-[28px] text-center">1</div>
            </div>
            <VRuler />
            <Canvas />
            <div className="bg-[#efeeec] flex justify-center">
              <div className="mt-[455px] w-[12px] h-[500px] rounded-full bg-[#c4c4c4]" />
            </div>
            <div />
            <div className="bg-[#efeeec] pl-[549px] pt-[18px]">
              <div className="w-[897px] h-[14px] rounded-full bg-[#c4c4c4]" />
            </div>
            <div className="border-2 border-[#dcd9d5] rounded-[14px] flex items-center justify-center">
              <Svg w={28} h={32} vb="0 0 28 32"><path d="M3 1Q-1 14 6 30L28 19Q16 7 3 1z" fill="url(#hue)" stroke="#000" strokeWidth="2" /></Svg>
            </div>
          </div>

          {/* dock handle */}
          <div className="w-[24px] shrink-0 flex flex-col items-center justify-center gap-[3px] pb-[30px]">
            <div className="w-[4px] h-[4px] rounded-full bg-[#555]" /><div className="w-[4px] h-[4px] rounded-full bg-[#555]" /><div className="w-[4px] h-[4px] rounded-full bg-[#555]" />
          </div>

          {/* dock */}
          <div className="w-[814px] shrink-0 mt-[10px] mb-[10px] bg-[#fdfdfd] flex flex-col">
            <div className="h-[74px] shrink-0 bg-[#ebeae8] border-b-2 border-[#d8d5d1] flex pl-[17px] relative">
              <div className="w-[331px] h-[74px] bg-[#f6f5f4] border-x-2 border-[#d3cfca] border-b-[8px] border-b-[#0a84e8] flex items-center pl-[22px]">
                <Svg w={32} h={32}>{layersPaths}</Svg>
                <span className="ml-[4px] text-[24px] tracking-[0.1px] text-[#8a8b8c] whitespace-nowrap">Layers and Objects</span>
                <Svg w={16} h={16} vb="0 0 16 16" className="ml-[12px]"><path d="M1 1l14 14M15 1L1 15" stroke="#b0b0b0" strokeWidth="3" /></Svg>
              </div>
              <div className="ml-[57px] self-center">{iFS}</div>
              <div className="ml-[96px] self-center">{iExport}</div>
              <div className="absolute right-[2px] top-[6px] w-[60px] h-[60px] rounded-[10px] bg-[#f0efed] flex items-center justify-center"><Chev c="#c4c4c4" /></div>
            </div>
            <div className="h-[72px] shrink-0 flex items-center relative">
              <div className="ml-[21px] mt-[6px]">
                <Svg w={32} h={26} vb="0 4 32 24"><path d="M9 5h18l4 12H13z" fill="#ffcc20" stroke="#000" strokeWidth="2" /><path d="M9 5h18l2 6H11z" fill="#ffdf60" /><path d="M1 13l8 0 4 4h16l2 5v4H7z" fill="#fff" stroke="#000" strokeWidth="2" /></Svg>
              </div>
              <div className="ml-[41px] mt-[2px]">
                <Svg><path d="M9 0v12M3 6h12" stroke="#000" strokeWidth="3.500" /><path d="M2 14h18l6 10H8z" fill="#fff" stroke="#000" strokeWidth="2" /><path d="M2 16l6 14h20l-2-6H8" stroke="#999" strokeWidth="2" /></Svg>
              </div>
              <div className="ml-auto flex items-center gap-[44px] pr-[24px] pt-[3px]">
                <Chev up /><Chev />
                <div className="w-[26px] h-[26px] rounded-full bg-[#8f9091] flex items-center justify-center"><Svg w={12} h={12} vb="0 0 12 12"><path d="M1 1l10 10M11 1L1 11" stroke="#fff" strokeWidth="3" /></Svg></div>
              </div>
            </div>
            <div className="flex-1 mx-[2px] mb-[5px] border-2 border-[#d8d5d1] bg-[#fdfdfd] text-[24px] text-[#2e3436]">
              {ROWS.map((r, i) => (
                <div key={i} className="h-[48px] flex">
                  <div className={`flex-1 flex items-center ${r.sel || ''}`}>
                    <div style={{ marginLeft: r.d * 36 }} className="w-[40px] flex items-center justify-center shrink-0">
                      {r.ar === 'down' && <Tr />}
                      {r.ar === 'r' && <Tr d="r" />}
                    </div>
                    <div className="w-[28px] ml-[10px] flex items-center justify-center shrink-0"><RIcon k={r.ic} c={r.c} /></div>
                    <span className="ml-[14px] pb-[5px] leading-none tracking-[0.05px] whitespace-nowrap">{r.t}</span>
                    {r.off && <div className="ml-auto mr-[56px] flex"><EyeOff /></div>}
                  </div>
                  <div className="w-[8px] h-[44px] my-[2px] mx-[4px] shrink-0" style={{ background: r.c }} />
                </div>
              ))}
            </div>
          </div>
        </div>

        {/* palette */}
        <div className="h-[58px] shrink-0 relative">
          <div className="flex gap-[2px] pt-[24px] items-start">
            <div className="w-[33px] ml-[1px] h-[32px] shrink-0 mr-[1px]">
              <Svg w={33} h={32} vb="0 0 33 32"><path d="M1 1l31 30M32 1L1 31" stroke="#a02428" strokeWidth="3" /></Svg>
            </div>
            {SW.map((c, i) => <div key={i} className="w-[32px] h-[32px] shrink-0" style={{ background: c }} />)}
            <div className="ml-[18px] mt-[2px]"><Chev up /></div>
            <div className="ml-[32px] mt-[2px]"><Chev /></div>
            <div className="absolute right-[4px] top-[2px] w-[36px] h-[56px] border-2 border-[#d8d5d1] rounded-[12px] flex flex-col items-center justify-center gap-[7px]">
              <div className="w-[28px] h-[5px] bg-[#9a9a9a]" /><div className="w-[28px] h-[5px] bg-[#9a9a9a]" /><div className="w-[28px] h-[5px] bg-[#9a9a9a]" />
            </div>
          </div>
        </div>

        {/* status */}
        <div className="flex-1 flex items-start text-[24px] text-[#96979a] leading-none">
          <div className="w-[292px] shrink-0 pt-[2px]">
            <div className="flex items-center h-[32px]">
              <span className="w-[80px] text-right">Fill:</span>
              <div className="ml-[32px] w-[99px] h-[32px] bg-black rounded-[4px]" />
            </div>
            <div className="flex items-center mt-[6px] h-[28px]">
              <span className="w-[80px] text-right">Stroke:</span>
              <span className="ml-[50px] font-bold">Unset</span>
              <span className="ml-[33px]">0.150</span>
            </div>
          </div>
          <span className="mt-[21px] ml-[8px] w-[29px] shrink-0">O:</span>
          <div className="mt-[2px]">
            <Spin w="w-[142px]" val="100" valCls="text-[24px] text-[#2e3436] pl-[12px]" cols="w-[34px]" />
          </div>
          <div className="w-[6px] h-[24px] mt-[19px] ml-[51px] shrink-0 bg-[#ff2f6a]" />
          <span className="mt-[21px] ml-[12px] w-[118px]">F.SilkS</span>
          <div className="mt-[16px] -ml-[2px]"><Eye /></div>
          <div className="mt-[16px] ml-[44px]"><LockO /></div>
          <div className="w-[2px] h-[44px] mt-[12px] ml-[23px] bg-[#e0dedb] shrink-0" />
          <span className="mt-[22px] ml-[12px] whitespace-nowrap">Drag to select nodes, click to edit only this object</span>
          <div className="ml-auto flex items-start pr-[25px]">
            <div className="w-[2px] h-[52px] mt-[2px] bg-[#dedbd8]" />
            <div className="ml-[19px] mt-[4px] w-[108px] leading-[26px]">
              <div className="flex justify-between"><span>X:</span><span>3.59</span></div>
              <div className="flex justify-between"><span>Y:</span><span>0.51</span></div>
            </div>
            <span className="ml-[20px] mt-[20px] w-[21px]">Z:</span>
            <div className="mt-[2px]"><Spin w="w-[186px]" val="6041%" valCls="text-[24px] text-[#2e3436] pl-[8px]" /></div>
            <span className="ml-[21px] mt-[20px] w-[25px]">R:</span>
            <div className="mt-[2px]"><Spin w="w-[200px]" val="0.00°" valCls="text-[24px] text-[#2e3436] text-center" /></div>
          </div>
        </div>
      </div>

      {/* dialog */}
      <div className="absolute left-[1508px] top-[510px] w-[524px] h-[508px] rounded-[20px] overflow-hidden bg-[#f6f5f4] shadow-[0_10px_40px_rgba(0,0,0,0.5)] flex flex-col">
        <div className="h-[57px] shrink-0 border-b-2 border-[#d6d5d3] bg-[linear-gradient(90deg,#bec0c2_0%,#c4c6c7_56%,#dfe1e1_66%,#e6e8e8_100%)] flex items-center relative">
          <div className="w-[24px] h-[24px] ml-[16px] rounded-full bg-[#ff5f57] border border-[#e04a42]" />
          <div className="w-[24px] h-[24px] ml-[16px] rounded-full bg-[#febc2e] border border-[#e0a020]" />
          <div className="w-[24px] h-[24px] ml-[16px] rounded-full bg-[#28c840] border border-[#1fa830]" />
          <span className="ml-[53px] text-[26.600px] font-bold text-[#4a4a4b]">Move to Layer</span>
        </div>
        <div className="mx-[5px] mt-[12px] h-[360px] shrink-0 border-2 border-[#cfcac5] bg-white overflow-hidden text-[24px] text-black">
          {DROWS.map((t, i) => (
            <div key={i} className={`h-[48px] flex items-center shrink-0 ${i === 0 ? 'bg-[#0284ea] text-white' : ''}`}>
              <div className={`ml-[8px] w-[46px] h-[35px] flex items-center justify-center rounded-[4px] shrink-0 ${i === 0 ? 'border-2 border-dashed border-[#7fc0f2]' : ''}`}>
                {i < 2 ? <Eye /> : <EyeOff />}
              </div>
              <div className="ml-[29px] shrink-0"><LockO /></div>
              <span className="ml-[63px] pb-[6px] leading-none whitespace-nowrap">{t}</span>
            </div>
          ))}
        </div>
        <div className="flex justify-end gap-[9px] pr-[5px] mt-[8px]">
          {['Cancel', 'Move'].map(t => (
            <div key={t} className="w-[169px] h-[67px] pb-[4px] border-2 border-[#d3cdc7] rounded-[14px] bg-[linear-gradient(180deg,#f6f5f4,#edecea)] flex items-center justify-center text-[24px] text-[#2e3436]">{t}</div>
          ))}
        </div>
      </div>

      {/* mouse cursor */}
      <svg width="26" height="38" viewBox="0 0 26 38" className="absolute left-[1821px] top-[608px]">
        <path d="M1 1v28l7-6 5 12 5-2-5-12h9z" fill="#000" stroke="#fff" strokeWidth="2" />
      </svg>
    </div>
  );
}
